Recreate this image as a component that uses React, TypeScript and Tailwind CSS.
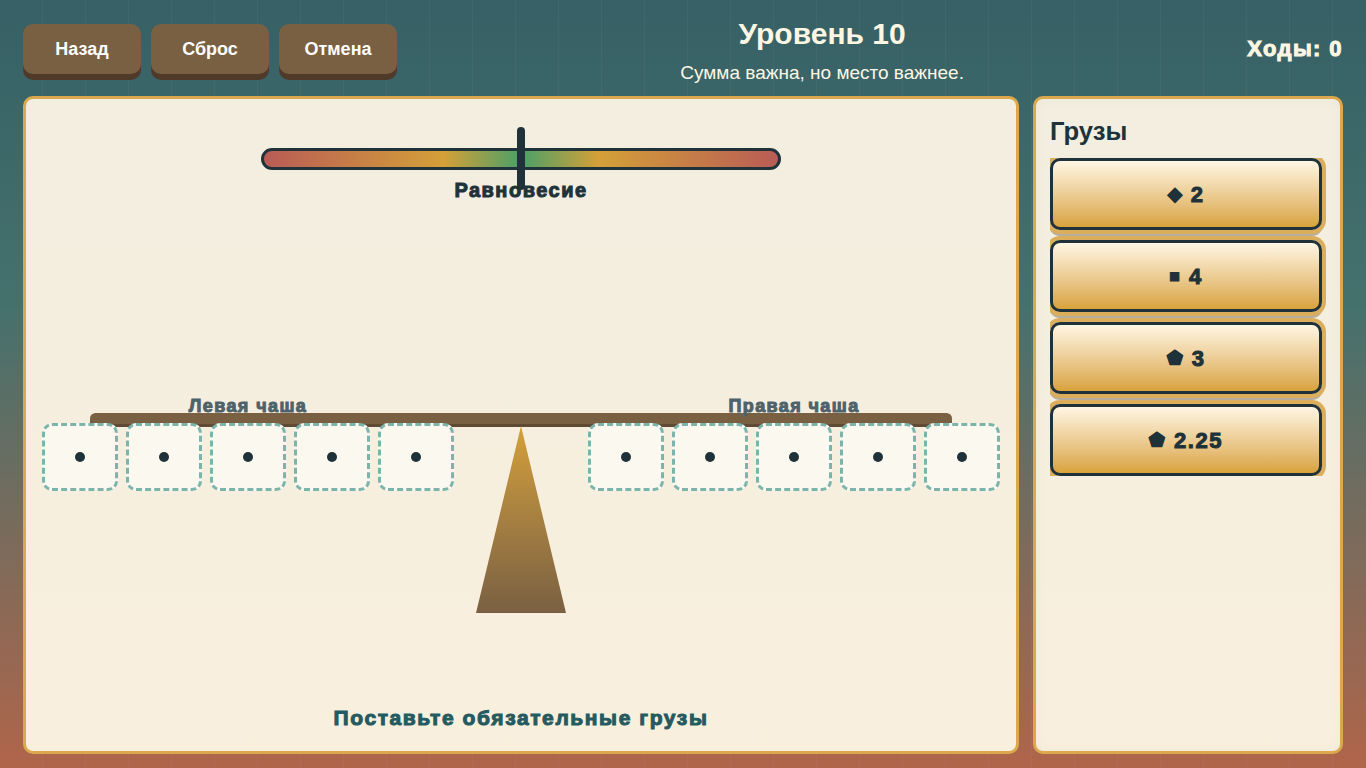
import React from 'react';

const weights = [
  { icon: '◆', value: '2' },
  { icon: '■', value: '4' },
  { icon: '⬟', value: '3' },
  { icon: '⬟', value: '2.25' },
];

const NavButton = ({ label }: { label: string }) => (
  <button className="w-[118px] h-[50px] mb-[6px] rounded-[10px] bg-[#7a6042] text-white text-[18px] font-bold shadow-[0_6px_0_#4f3a2a]">
    {label}
  </button>
);

const SlotGroup = ({ label }: { label: string }) => (
  <div className="flex flex-col items-center">
    <div className="h-[20px] text-[18px] leading-[20px] font-bold tracking-[1.4px] [-webkit-text-stroke:1px_#4f626a] text-[#4f626a] relative z-10">
      {label}
    </div>
    <div className="flex gap-[8px] relative z-10 mt-[7px]">
      {[0, 1, 2, 3, 4].map((i) => (
        <div
          key={i}
          className="w-[76px] h-[68px] rounded-[10px] border-[3px] border-dashed border-[#7ab4ab] bg-[#fbf8f0] flex items-center justify-center"
        >
          <span className="w-[10px] h-[10px] rounded-full bg-[#1f3239]" />
        </div>
      ))}
    </div>
  </div>
);

export default function App() {
  return (
    <div className="w-[1366px] h-[768px] overflow-hidden flex flex-col px-[23px] pb-[14px] font-['Liberation_Sans',Arial,sans-serif] [background:repeating-linear-gradient(90deg,transparent_0,transparent_42px,rgba(255,255,255,0.035)_42px,rgba(255,255,255,0.035)_43px),linear-gradient(180deg,#366065_0%,#45716d_40%,#b0654a_100%)] bg-[#366065]">
      <header className="h-[96px] flex justify-between items-start shrink-0">
        <div className="flex gap-[10px] pt-[24px]">
          <NavButton label="Назад" />
          <NavButton label="Сброс" />
          <NavButton label="Отмена" />
        </div>
        <div className="flex flex-col items-center text-center pt-[16px]">
          <h1 className="text-[30px] leading-[36px] font-bold text-[#fdf6e3]">Уровень 10</h1>
          <p className="mt-[10px] text-[19px] leading-[21px] text-[#fdf6e3]">Сумма важна, но место важнее.</p>
        </div>
        <div className="pt-[36px] text-[22px] leading-[26px] font-bold tracking-[1.4px] [-webkit-text-stroke:1px_#fdf6e3] text-[#fdf6e3]">
          Ходы: 0
        </div>
      </header>

      <div className="flex-1 flex gap-[14px] min-h-0">
        <main className="w-[996px] rounded-[10px] border-[3px] border-[#dba84d] bg-linear-to-b from-[#f2eee0] to-[#f9efdd] flex flex-col items-center relative">
          {/* meter */}
          <div className="relative mt-[49px] w-[520px] h-[22px] rounded-full border-[3px] border-[#1f3239] bg-[linear-gradient(90deg,#b85c56_0%,#d4a038_35%,#4aa068_50%,#d4a038_65%,#b85c56_100%)]">
            <div className="absolute left-[253px] top-[-24px] w-[8px] h-[63px] rounded-full bg-[#1f3239]" />
          </div>
          <div className="mt-[8px] h-[24px] text-[20px] leading-[24px] font-bold tracking-[1.5px] [-webkit-text-stroke:1px_#1f3239] text-[#1f3239]">
            Равновесие
          </div>

          {/* scale */}
          <div className="relative mt-[194px] w-[958px] flex justify-between">
            <SlotGroup label="Левая чаша" />
            <SlotGroup label="Правая чаша" />
            <div className="absolute left-[48px] top-[17px] w-[862px] h-[11px] rounded-full bg-[#7a6042] shadow-[0_3px_0_#5f4a33]" />
          </div>
          <div className="w-[90px] h-[187px] -mt-[65px] [clip-path:polygon(50%_0,100%_100%,0_100%)] bg-linear-to-b from-[#d4a038] to-[#7a6042]" />

          <div className="mt-auto mb-[21px] text-[21px] leading-[24px] font-bold tracking-[1.6px] [-webkit-text-stroke:1px_#245a60] text-[#245a60]">
            Поставьте обязательные грузы
          </div>
        </main>

        <aside className="w-[310px] rounded-[10px] border-[3px] border-[#dba84d] bg-linear-to-b from-[#f2eee0] to-[#f9efdd] shadow-[inset_0_0_14px_rgba(0,0,0,0.03)] px-[14px] pt-[16px] flex flex-col">
          <h2 className="h-[32px] text-[25.6px] leading-[32px] font-bold text-[#1f3239]">Грузы</h2>
          <div className="mt-[11px] w-[276px] h-[318px] overflow-hidden flex flex-col gap-[10px]">
            {weights.map((w, i) => (
              <button
                key={i}
                className="w-[272px] h-[72px] shrink-0 rounded-[10px] border-[3px] border-[#1f3239] bg-linear-to-b from-[#fff6e3] to-[#d9a33a] shadow-[0_0_0_4px_#dcae5c,0_5px_0_1px_#b5ae9e] flex items-center justify-center gap-[9px] pt-[1px] text-[22px] font-bold tracking-[1.5px] [-webkit-text-stroke:1px_#1f3239] text-[#1f3239]"
              >
                <span className="text-[17.6px] tracking-normal">{w.icon}</span>
                <span>{w.value}</span>
              </button>
            ))}
          </div>
        </aside>
      </div>
    </div>
  );
}
